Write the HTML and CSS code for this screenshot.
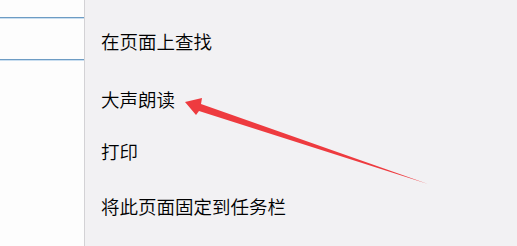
FILE: index.html
```html
<!DOCTYPE html>
<html lang="zh-CN">
<head>
<meta charset="utf-8">
<link rel="stylesheet" href="styles.css">
</head>
<body>
<div class="page">
  <div class="side">
    <div class="field"></div>
  </div>
  <ul class="menu">
    <li class="item">在页面上查找</li>
    <li class="item">大声朗读</li>
    <li class="item">打印</li>
    <li class="item">将此页面固定到任务栏</li>
  </ul>
</div>
<svg class="arrow" width="517" height="246" viewBox="0 0 517 246">
  <polygon points="185,102 202,98 201,104 428,184 199,111 196,115" fill="#ee3b3f"/>
</svg>
</body>
</html>
```
FILE: styles.css
```css
html, body {
  margin: 0;
  padding: 0;
  width: 517px;
  height: 246px;
  overflow: hidden;
  background: #f2f1f3;
}
.page {
  display: flex;
  height: 246px;
}
.side {
  width: 84px;
  background: #fdfdfd;
  border-right: 1px solid #d3d2d5;
  padding-top: 17px;
}
.field {
  height: 41px;
  border-top: 1px solid #6d9cc4;
  border-bottom: 1px solid #6d9cc4;
  box-shadow: inset 0 1px 0 #c9def0, 0 1px 0 #c9def0;
}
.menu {
  flex: 1;
  list-style: none;
  margin: 0;
  padding: 14px 0 0 16px;
  display: flex;
  flex-direction: column;
}
.item {
  height: 55px;
  line-height: 55px;
  font-family: "Noto Sans CJK SC", "Microsoft YaHei", sans-serif;
  font-size: 18.5px;
  font-weight: 350;
  color: #000;
  white-space: nowrap;
}
.item:nth-child(2) {
  margin-top: 3px;
  margin-bottom: -3px;
}
.arrow {
  position: absolute;
  left: 0;
  top: 0;
  pointer-events: none;
}
```
